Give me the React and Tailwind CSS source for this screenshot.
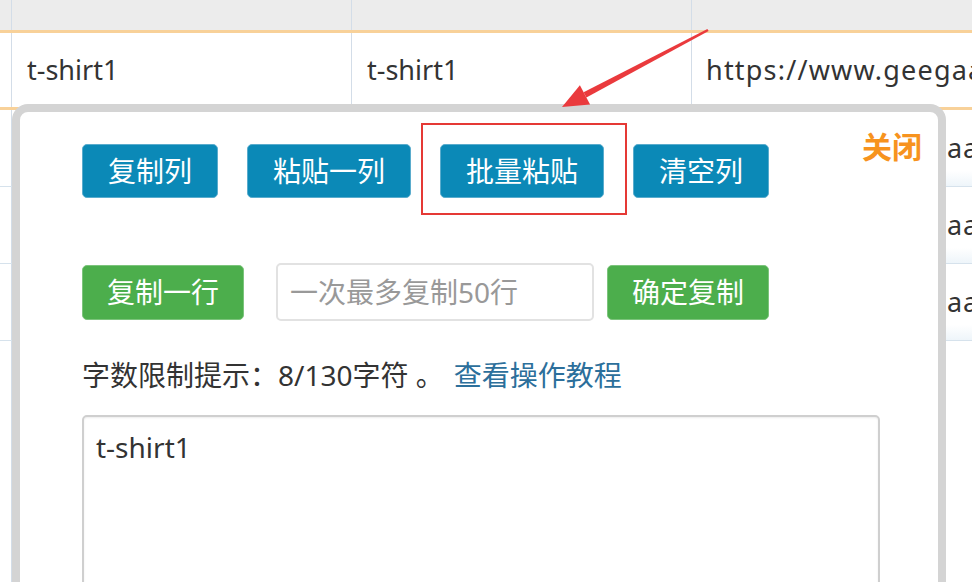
import React from "react";

const font = { fontFamily: '"Noto Sans", "Noto Sans CJK SC", sans-serif' };
const url = "https://www.geegaa.com/products/t-shirt";

function Row({ a, b, tint }) {
  return (
    <div className="flex h-[77px] border-b border-[#d6e2ec]">
      <div className="w-[12px] border-r border-[#d3dde8]" />
      <div className={"w-[340px] border-r border-[#d3dde8] flex items-center pl-[15px] " + tint}>{a}</div>
      <div className={"w-[340px] border-r border-[#d3dde8] flex items-center pl-[15px] " + tint}>{b}</div>
      <div className={"flex-1 flex items-center pl-[14px] tracking-[0.9px] whitespace-nowrap overflow-hidden " + tint}>{url}</div>
    </div>
  );
}

function BlueBtn({ children }) {
  return (
    <button className="h-[54px] px-[25px] rounded-[5px] bg-[#0b89b7] border border-[#5aaccd] text-white text-[28px] leading-none">
      {children}
    </button>
  );
}

function GreenBtn({ children }) {
  return (
    <button className="h-[55px] px-[24px] rounded-[5px] bg-[#4cae4c] border border-[#7cc47c] text-white text-[28px] leading-none">
      {children}
    </button>
  );
}

export default function App() {
  return (
    <div className="relative w-[972px] h-[582px] overflow-hidden bg-white text-[#333] text-[28px]" style={font}>
      {/* background table */}
      <div className="flex h-[30px] bg-[#ececec]">
        <div className="w-[12px] border-r border-[#d3dde8]" />
        <div className="w-[340px] border-r border-[#d3dde8]" />
        <div className="w-[340px] border-r border-[#d3dde8]" />
        <div className="flex-1" />
      </div>
      <div className="h-[3px] bg-[#f8d199]" />
      <div className="flex h-[74px] text-[27px]">
        <div className="w-[12px] border-r border-[#d3dde8]" />
        <div className="w-[340px] border-r border-[#d3dde8] flex items-center pl-[15px]">t-shirt1</div>
        <div className="w-[340px] border-r border-[#d3dde8] flex items-center pl-[15px]">t-shirt1</div>
        <div className="flex-1 flex items-center pl-[14px] tracking-[1.2px] whitespace-nowrap overflow-hidden">{url}</div>
      </div>
      <div className="h-[3px] bg-[#f8d199]" />
      <div className="text-[27px]">
        <Row a="t-shirt2" b="t-shirt2" tint="bg-gradient-to-b from-white from-80% to-[#eef5fa]" />
        <Row a="t-shirt3" b="t-shirt3" tint="bg-gradient-to-b from-white from-80% to-[#eef5fa]" />
        <Row a="t-shirt4" b="t-shirt4" tint="bg-gradient-to-b from-white from-80% to-[#eef5fa]" />
      </div>
      <div className="flex h-[300px]">
        <div className="w-[12px] border-r border-[#d3dde8]" />
      </div>

      {/* popup */}
      <div className="absolute left-[12px] top-[104px] w-[934px] h-[500px] border-[8px] border-[#d4d4d4] rounded-[16px] bg-white pl-[62px] pt-[32px]">
        <div className="absolute right-[16px] top-[12px] text-[30px] font-bold text-[#f7931e] leading-normal">关闭</div>
        <div className="absolute left-[401px] top-[11px] w-[206px] h-[92px] border-2 border-[#e53935]" />

        <div className="flex gap-[29px]">
          <BlueBtn>复制列</BlueBtn>
          <BlueBtn>粘贴一列</BlueBtn>
          <BlueBtn>批量粘贴</BlueBtn>
          <BlueBtn>清空列</BlueBtn>
        </div>

        <div className="flex items-center mt-[65px]">
          <GreenBtn>复制一行</GreenBtn>
          <input
            className="ml-[32px] w-[318px] h-[58px] border-2 border-[#e2e2e2] rounded-[5px] px-[12px] text-[28px] placeholder:text-[#999] outline-none"
            placeholder="一次最多复制50行"
            style={font}
          />
          <div className="ml-[13px]">
            <GreenBtn>确定复制</GreenBtn>
          </div>
        </div>

        <div className="mt-[36px] h-[36px] flex items-center whitespace-nowrap">
          <span>字数限制提示：8/130字符 。</span>
          <a className="ml-[10px] text-[#2c6f9b]">查看操作教程</a>
        </div>

        <div className="mt-[22px] w-[798px] h-[200px] border-2 border-[#cfcfcf] rounded-[5px] shadow-[inset_0_1px_2px_rgba(0,0,0,0.08)] px-[12px] pt-[13px] leading-tight">
          t-shirt1
        </div>
      </div>

      {/* annotation arrow */}
      <svg className="absolute left-0 top-0 pointer-events-none" width="972" height="582">
        <polygon points="708.6,31.1 707.4,28.9 583.6,92.2 586.4,97.6" fill="#ea3a3d" />
        <polygon points="562,107 590.1,104.6 579.9,85.2" fill="#ea3a3d" />
      </svg>
    </div>
  );
}
